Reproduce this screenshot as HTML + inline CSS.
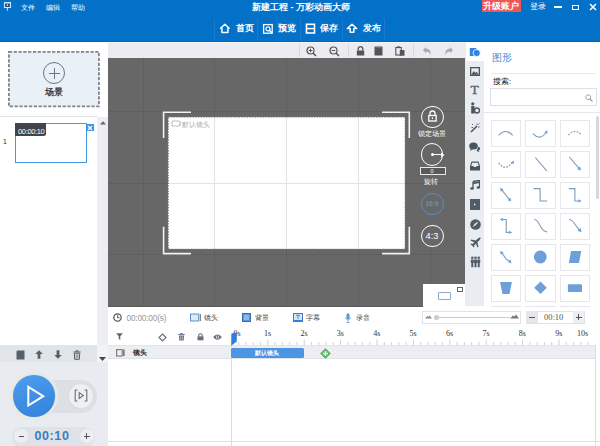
<!DOCTYPE html>
<html><head><meta charset="utf-8">
<style>
*{box-sizing:border-box;margin:0;padding:0}
html,body{width:600px;height:446px;overflow:hidden;background:#fff;font-family:"Liberation Sans",sans-serif;position:relative}
.a{position:absolute}
.t{position:absolute;white-space:nowrap;line-height:1}
</style></head><body>

<!-- TOP BAR -->
<div class="a" style="left:0;top:0;width:600px;height:42px;background:#0471c9"></div>
<div class="a" style="left:0;top:41px;width:600px;height:1px;background:#0963b6"></div>
<!-- logo -->
<svg class="a" style="left:0;top:0" width="14" height="12" viewBox="0 0 14 12"><rect x="4.5" y="2.8" width="6" height="4.7" fill="#1f4f80" stroke="#cfe6ff" stroke-width="1.1"/><path d="M4 2.6H11" stroke="#cfe6ff" stroke-width="1.2"/><circle cx="7.4" cy="5" r="0.8" fill="#fff"/><path d="M7.4 8V10.8" stroke="#bfe0ff" stroke-width="1"/></svg>
<div class="t" style="left:21px;top:3.8px;font-size:7px;color:#fff">文件</div>
<div class="t" style="left:46px;top:3.8px;font-size:7px;color:#fff">编辑</div>
<div class="t" style="left:71px;top:3.8px;font-size:7px;color:#fff">帮助</div>
<div class="t" style="left:252px;top:2.5px;font-size:9px;color:#fff;font-weight:bold">新建工程 - 万彩动画大师</div>
<!-- upgrade -->
<div class="a" style="left:482px;top:0;width:38.7px;height:12.3px;background:#ec575b"></div>
<div class="t" style="left:483px;top:2px;font-size:9px;color:#fff;font-weight:bold">升级账户</div>
<div class="t" style="left:530px;top:3px;font-size:7.5px;color:#fff">登录</div>
<div class="a" style="left:554px;top:6px;width:8px;height:1.5px;background:#fff"></div>
<div class="a" style="left:572px;top:4.5px;width:7px;height:5px;border:1.5px solid #fff"></div>
<svg class="a" style="left:589px;top:3px" width="8" height="8" viewBox="0 0 8 8"><path d="M1 1L7 7M7 1L1 7" stroke="#fff" stroke-width="1.5"/></svg>

<!-- toolbar buttons -->
<div class="a" style="left:214px;top:18px;width:1px;height:22px;background:#1b7acd"></div>
<div class="a" style="left:257px;top:18px;width:1px;height:22px;background:#1b7acd"></div>
<div class="a" style="left:300px;top:18px;width:1px;height:22px;background:#1b7acd"></div>
<div class="a" style="left:342px;top:18px;width:1px;height:22px;background:#1b7acd"></div>
<div class="a" style="left:384px;top:18px;width:1px;height:22px;background:#1b7acd"></div>
<!-- home icon -->
<svg class="a" style="left:218px;top:22px" width="14" height="13" viewBox="0 0 14 13"><path d="M6.9 2.2L2.6 6.3H3.9V10.4H9.9V6.3H11.2Z" stroke="#fff" stroke-width="1.5" fill="none" stroke-linejoin="round"/></svg>
<div class="t" style="left:236px;top:24px;font-size:9px;color:#fff;font-weight:bold">首页</div>
<!-- preview icon -->
<svg class="a" style="left:262px;top:23px" width="12" height="12" viewBox="0 0 12 12"><rect x="1.6" y="1.6" width="8.6" height="8.6" stroke="#fff" stroke-width="1.3" fill="none"/><circle cx="5.9" cy="5.9" r="2" stroke="#fff" stroke-width="1.2" fill="none"/><path d="M7.3 7.3L9.8 9.8" stroke="#fff" stroke-width="1.3"/></svg>
<div class="t" style="left:278px;top:24px;font-size:9px;color:#fff;font-weight:bold">预览</div>
<!-- save icon -->
<svg class="a" style="left:305px;top:23px" width="11" height="11" viewBox="0 0 11 11"><rect x="1.5" y="1.3" width="8" height="8.7" stroke="#fff" stroke-width="1.6" fill="none"/><path d="M1.5 5.6H9.5" stroke="#fff" stroke-width="1.5"/></svg>
<div class="t" style="left:320px;top:24px;font-size:9px;color:#fff;font-weight:bold">保存</div>
<!-- publish icon -->
<svg class="a" style="left:345px;top:22px" width="14" height="13" viewBox="0 0 14 13"><path d="M7 2.2L2.3 6.5H5.2V10.3H8.8V6.5H11.7Z" stroke="#fff" stroke-width="1.5" fill="none" stroke-linejoin="round"/></svg>
<div class="t" style="left:363px;top:24px;font-size:9px;color:#fff;font-weight:bold">发布</div>

<!-- LEFT PANEL -->
<div class="a" style="left:0;top:42px;width:108px;height:304px;background:#fff"></div>
<svg class="a" style="left:7px;top:50px" width="94" height="58" viewBox="0 0 94 58"><rect x="1.9" y="1.9" width="90" height="54.5" fill="#eaf0f8" stroke="#808387" stroke-width="1.8" stroke-dasharray="3.2 1.6"/></svg>
<div class="a" style="left:43px;top:62px;width:22px;height:22px;border:1.3px solid #6b7682;border-radius:50%"></div>
<div class="a" style="left:48.5px;top:72.5px;width:11px;height:1px;background:#6b7682"></div>
<div class="a" style="left:53.5px;top:67.5px;width:1px;height:11px;background:#6b7682"></div>
<div class="t" style="left:45px;top:88px;font-size:9px;color:#3a3a3a;font-weight:bold">场景</div>
<div class="a" style="left:0;top:116px;width:97px;height:1px;background:#dde1e6"></div>
<div class="a" style="left:97px;top:117px;width:11px;height:228px;background:#eceef2"></div>
<svg class="a" style="left:99.5px;top:120.5px" width="6" height="4" viewBox="0 0 6 4"><path d="M0 3.5L3 0.3L6 3.5Z" fill="#666"/></svg>
<div class="t" style="left:3px;top:138px;font-size:7px;color:#333">1</div>
<div class="a" style="left:15px;top:123px;width:71.5px;height:40px;border:1.5px solid #4797e0;background:#fff"></div>
<div class="a" style="left:15px;top:123px;width:30.5px;height:13.3px;background:#3f454b;border-radius:0 0 2.5px 0"></div>
<div class="t" style="left:18px;top:127.5px;font-size:7.5px;color:#fff;letter-spacing:-0.35px">00:00:10</div>
<div class="a" style="left:86px;top:124.3px;width:8px;height:6.7px;background:#3a93e8"></div>
<svg class="a" style="left:87px;top:124.6px" width="6" height="6" viewBox="0 0 6 6"><path d="M1 1L5 5M5 1L1 5" stroke="#fff" stroke-width="1.4"/></svg>
<!-- left bottom -->
<div class="a" style="left:0;top:345px;width:97px;height:17.5px;background:#e1e4e8"></div>
<div class="a" style="left:97px;top:345px;width:11px;height:17px;background:#f2f3f5"></div>
<div class="a" style="left:0;top:362px;width:108px;height:84px;background:#e8ebf0"></div>


<!-- left bottom icons -->
<svg class="a" style="left:16px;top:349.5px" width="9" height="10" viewBox="0 0 9 10"><path d="M1.5 0.5H8.5V9.5H0.5V1.5Z" fill="#56606b"/><path d="M1.5 0.5V1.5H0.5" fill="none" stroke="#8a939c" stroke-width="0.5"/></svg>
<svg class="a" style="left:35px;top:350px" width="8" height="9" viewBox="0 0 8 9"><path d="M4 0.3L7.8 4H5.4V8.7H2.6V4H0.2Z" fill="#56606b"/></svg>
<svg class="a" style="left:54px;top:350px" width="8" height="9" viewBox="0 0 8 9"><path d="M4 8.7L7.8 5H5.4V0.3H2.6V5H0.2Z" fill="#56606b"/></svg>
<svg class="a" style="left:73px;top:349.5px" width="8" height="10" viewBox="0 0 8 10"><path d="M0.3 2H7.7M2.8 2V0.8H5.2V2" fill="none" stroke="#56606b" stroke-width="0.9"/><path d="M1.3 3.2H6.7L6.3 9.3H1.7Z" fill="none" stroke="#56606b" stroke-width="1"/><path d="M3.2 4.3V8.3M4.8 4.3V8.3" stroke="#56606b" stroke-width="0.7"/></svg>
<svg class="a" style="left:99px;top:357px" width="7" height="4" viewBox="0 0 7 4"><path d="M0 0H7L3.5 4Z" fill="#444"/></svg>
<!-- play pill -->
<div class="a" style="left:12px;top:379.5px;width:85px;height:33.5px;border-radius:17px;background:#dcdfe4"></div>
<div class="a" style="left:10px;top:371.5px;width:48px;height:48px;border-radius:50%;background:#ece9e2"></div>
<div class="a" style="left:12.5px;top:374.3px;width:43px;height:43px;border-radius:50%;background:#cfe3f7"></div>
<div class="a" style="left:13.2px;top:375px;width:41.6px;height:41.6px;border-radius:50%;background:linear-gradient(160deg,#4d9df0,#3282db)"></div>
<svg class="a" style="left:20px;top:380px" width="30" height="32" viewBox="0 0 30 32"><path d="M8.3 6.8L23.3 16.2L8.3 25.5Z" fill="none" stroke="#fff" stroke-width="2" stroke-linejoin="miter"/></svg>
<div class="a" style="left:67.5px;top:382.5px;width:26.5px;height:26.5px;border-radius:50%;background:#eff0f2;border:1px solid #d8dbe0"></div>
<svg class="a" style="left:74px;top:389px" width="14" height="13" viewBox="0 0 14 13"><path d="M3.5 1H1.2V12H3.5M10.5 1H12.8V12H10.5" fill="none" stroke="#6a6e74" stroke-width="1.1"/><path d="M5.2 3.6L9.3 6.5L5.2 9.4Z" fill="none" stroke="#6a6e74" stroke-width="1.1"/></svg>
<!-- time pill -->
<div class="a" style="left:12.3px;top:426.7px;width:82.5px;height:21px;border-radius:10.5px;background:#dfe2e7"></div>
<div class="a" style="left:14.3px;top:429px;width:14px;height:14px;border-radius:50%;background:#eceef1"></div>
<div class="a" style="left:79.7px;top:429px;width:14px;height:14px;border-radius:50%;background:#eceef1"></div>
<div class="a" style="left:18.5px;top:435.5px;width:5.5px;height:1.1px;background:#555"></div>
<div class="a" style="left:84px;top:435.5px;width:5.5px;height:1.1px;background:#555"></div>
<div class="a" style="left:86.2px;top:433.2px;width:1.1px;height:5.5px;background:#555"></div>
<div class="t" style="left:34.5px;top:429.8px;font-size:12.5px;font-weight:bold;color:#3a7cc6;letter-spacing:0.6px">00:10</div>
<!-- CANVAS -->
<div class="a" style="left:108px;top:42px;width:357px;height:16px;background:#eaecf0"></div>
<div class="a" style="left:108px;top:42px;width:357px;height:1px;background:#f2f6fa"></div>
<div class="a" style="left:108px;top:58px;width:357px;height:249px;background:#676767"></div>
<div class="a" style="left:108px;top:306px;width:357px;height:1px;background:#5a5a5a"></div>


<!-- grid -->
<div class="a" style="left:143px;top:58px;width:1px;height:248px;background:#5f5f5f"></div>
<div class="a" style="left:214px;top:58px;width:1px;height:248px;background:#5f5f5f"></div>
<div class="a" style="left:286px;top:58px;width:1px;height:248px;background:#5f5f5f"></div>
<div class="a" style="left:358px;top:58px;width:1px;height:248px;background:#5f5f5f"></div>
<div class="a" style="left:430px;top:58px;width:1px;height:47px;background:#5f5f5f"></div>
<div class="a" style="left:430px;top:247px;width:1px;height:59px;background:#5f5f5f"></div>
<div class="a" style="left:108px;top:111px;width:357px;height:1px;background:#5f5f5f"></div>
<div class="a" style="left:108px;top:183px;width:357px;height:1px;background:#5f5f5f"></div>
<div class="a" style="left:108px;top:254px;width:357px;height:1px;background:#5f5f5f"></div>
<!-- stage -->
<div class="a" style="left:168px;top:117px;width:237px;height:132px;background:#fff"></div>
<div class="a" style="left:214px;top:117px;width:1px;height:132px;background:#e2e2e2"></div>
<div class="a" style="left:286px;top:117px;width:1px;height:132px;background:#e2e2e2"></div>
<div class="a" style="left:358px;top:117px;width:1px;height:132px;background:#e2e2e2"></div>
<div class="a" style="left:168px;top:183px;width:237px;height:1px;background:#e2e2e2"></div>
<svg class="a" style="left:150px;top:100px" width="280" height="170" viewBox="150 100 280 170">
 <rect x="168.1" y="116.8" width="237.2" height="132.6" fill="none" stroke="#747474" stroke-width="1.3" stroke-dasharray="1.6 1.1"/>
 <g fill="none" stroke="#f2f2f2" stroke-width="1.6">
  <path d="M163.6 138V112.2H191"/>
  <path d="M382 112.2H409.3V138"/>
  <path d="M163.6 226.7V253.6H191"/>
  <path d="M382 253.6H409.3V226.7"/>
 </g>
</svg>
<!-- default camera label -->
<svg class="a" style="left:171px;top:120px" width="10" height="7" viewBox="0 0 10 7"><path d="M1 1H8.3V2.3L9.3 1.8V5.2L8.3 4.7V6H1Z" fill="none" stroke="#b5b5b5" stroke-width="0.9"/></svg>
<div class="t" style="left:182px;top:121px;font-size:7px;color:#a8a8a8">默认镜头</div>
<!-- right controls -->
<div class="a" style="left:421px;top:105.5px;width:22.5px;height:22.5px;border:1.5px solid #fff;border-radius:50%"></div>
<svg class="a" style="left:427px;top:110px" width="11" height="12" viewBox="0 0 11 12"><path d="M3 5.5V3.5A2.5 2.5 0 0 1 8 3.5V5.5" fill="none" stroke="#fff" stroke-width="1.3"/><rect x="1.8" y="5.5" width="7.4" height="5.5" fill="none" stroke="#fff" stroke-width="1.3"/><path d="M5.5 7.3V9" stroke="#fff" stroke-width="1.2"/></svg>
<div class="t" style="left:418px;top:130px;font-size:7.3px;color:#fff">锁定场景</div>
<div class="a" style="left:420.8px;top:143px;width:22.5px;height:22.5px;border:1.5px solid #fff;border-radius:50%"></div>
<div class="a" style="left:430.5px;top:152.8px;width:3px;height:3px;background:#fff;border-radius:50%"></div>
<div class="a" style="left:432px;top:153.6px;width:11px;height:1.3px;background:#fff"></div>
<svg class="a" style="left:441px;top:151.5px" width="4" height="6" viewBox="0 0 4 6"><path d="M0 0.5L3.5 3L0 5.5Z" fill="#fff"/></svg>
<div class="a" style="left:420px;top:167px;width:25.5px;height:8px;border:1px solid #e8e8e8;background:#5a5a5a"></div>
<div class="t" style="left:430.5px;top:168.5px;font-size:5.5px;color:#fff">0</div>
<div class="t" style="left:424px;top:177.5px;font-size:7.3px;color:#fff">旋转</div>
<div class="a" style="left:421px;top:192.7px;width:22.8px;height:22.8px;border:1.8px solid #5a8bcb;border-radius:50%"></div>
<div class="t" style="left:425.5px;top:200.3px;font-size:7px;color:#5b90d8;letter-spacing:-0.3px;font-weight:bold">16:9</div>
<div class="a" style="left:421px;top:224.5px;width:22.5px;height:22.5px;border:1.5px solid #fff;border-radius:50%"></div>
<div class="t" style="left:425.5px;top:231.5px;font-size:9.3px;color:#fff">4:3</div>
<!-- mini preview -->
<div class="a" style="left:423px;top:284px;width:42px;height:23px;background:#fff"></div>
<div class="a" style="left:438px;top:292px;width:12.5px;height:7.5px;border:1px solid #8fabc9;border-radius:1px"></div>
<div class="a" style="left:457px;top:287px;width:6px;height:4.5px;border:0.8px solid #666;border-top-width:1.8px"></div>


<!-- canvas toolbar icons -->
<div class="a" style="left:299px;top:43px;width:1px;height:14px;background:#d6d9de"></div>
<div class="a" style="left:348px;top:43px;width:1px;height:14px;background:#d6d9de"></div>
<div class="a" style="left:413px;top:43px;width:1px;height:14px;background:#d6d9de"></div>
<svg class="a" style="left:306px;top:46px" width="11" height="11" viewBox="0 0 11 11"><circle cx="4.5" cy="4.5" r="3.5" fill="none" stroke="#555" stroke-width="1.2"/><path d="M2.7 4.5H6.3M4.5 2.7V6.3" stroke="#555" stroke-width="1"/><path d="M7 7L10 10" stroke="#555" stroke-width="1.5"/></svg>
<svg class="a" style="left:329px;top:46px" width="11" height="11" viewBox="0 0 11 11"><circle cx="4.5" cy="4.5" r="3.5" fill="none" stroke="#555" stroke-width="1.2"/><path d="M2.7 4.5H6.3" stroke="#555" stroke-width="1"/><path d="M7 7L10 10" stroke="#555" stroke-width="1.5"/></svg>
<svg class="a" style="left:356px;top:46px" width="9" height="10" viewBox="0 0 9 10"><path d="M2.2 4.5V3A2.3 2.3 0 0 1 6.8 3V4.5" fill="none" stroke="#555" stroke-width="1.3"/><rect x="0.8" y="4.5" width="7.4" height="5" fill="#555"/></svg>
<svg class="a" style="left:374px;top:46px" width="9" height="10" viewBox="0 0 9 10"><rect x="0.5" y="0.5" width="8" height="9" rx="0.5" fill="#555"/><path d="M1.5 1.5H7.5" stroke="#888" stroke-width="0.6"/></svg>
<svg class="a" style="left:395px;top:46px" width="10" height="10" viewBox="0 0 10 10"><rect x="0.8" y="1.5" width="5.5" height="7.5" fill="none" stroke="#555" stroke-width="1.1"/><rect x="2.3" y="0.3" width="2.5" height="1.8" fill="#555"/><rect x="4.8" y="4" width="4.7" height="5.7" fill="#555"/></svg>
<svg class="a" style="left:422px;top:46px" width="10" height="10" viewBox="0 0 10 10"><path d="M1 4L4 1V2.8C7.5 2.8 9 5 8.5 9C7.8 6.8 6.5 5.5 4 5.5V7.2Z" fill="#a5a8ad"/></svg>
<svg class="a" style="left:443.5px;top:46px" width="10" height="10" viewBox="0 0 10 10"><path d="M9 4L6 1V2.8C2.5 2.8 1 5 1.5 9C2.2 6.8 3.5 5.5 6 5.5V7.2Z" fill="#a5a8ad"/></svg>

<!-- RIGHT ICON STRIP -->
<div class="a" style="left:465px;top:42px;width:19px;height:264px;background:#e9ecf1"></div>
<div class="a" style="left:466px;top:42px;width:18px;height:19px;background:#fff"></div>


<!-- strip icons -->
<svg class="a" style="left:469px;top:47px" width="12" height="10" viewBox="0 0 12 10"><rect x="0.8" y="1" width="6.5" height="8" fill="#2f86dc"/><circle cx="7.7" cy="6" r="3.6" fill="#2f86dc" stroke="#fff" stroke-width="0.8"/></svg>
<svg class="a" style="left:470px;top:66.5px" width="10" height="9" viewBox="0 0 10 9"><rect x="0" y="0" width="10" height="9" fill="#4a5560"/><rect x="1.3" y="1.3" width="7.4" height="6.4" fill="#e9ecf1"/><path d="M1.3 7.7L3.8 4L5.5 6L6.8 4.8L8.7 7.7Z" fill="#4a5560"/></svg>
<div class="t" style="left:470.5px;top:82.5px;font-size:13.5px;color:#525c67;font-family:'Liberation Serif',serif;-webkit-text-stroke:0.3px #525c67">T</div>
<svg class="a" style="left:470px;top:102px" width="10" height="12" viewBox="0 0 10 12"><circle cx="2.8" cy="1.8" r="1.6" fill="#4a5560"/><path d="M1.2 4H4.5V11.5H1.2Z" fill="#4a5560"/><circle cx="7" cy="8.5" r="2.5" fill="none" stroke="#4a5560" stroke-width="1.4"/></svg>
<svg class="a" style="left:470px;top:123px" width="10" height="10" viewBox="0 0 10 10"><path d="M1 9L7 3" stroke="#4a5560" stroke-width="1.6"/><path d="M7 0.5V2M8.5 1.5L9.5 0.5M8 4H9.5M2 1L3 2M1.5 4.5H3" stroke="#4a5560" stroke-width="0.9"/></svg>
<svg class="a" style="left:469px;top:142px" width="12" height="10" viewBox="0 0 12 10"><ellipse cx="4.5" cy="4" rx="4.3" ry="3.5" fill="#4a5560"/><path d="M2 6.5L1 9L4 7Z" fill="#4a5560"/><path d="M9.5 4.5C11.5 5.5 11.5 8 9.5 8.5L10.5 10L7.5 9" fill="#4a5560"/></svg>
<svg class="a" style="left:470px;top:161px" width="10" height="10" viewBox="0 0 10 10"><path d="M1.5 0.5H8.5L10 5V9.5H0V5Z" fill="#4a5560"/><path d="M2.2 1.7H7.8L8.8 5H6.3V6H3.7V5H1.2Z" fill="#e9ecf1"/></svg>
<svg class="a" style="left:470px;top:180px" width="10" height="10" viewBox="0 0 10 10"><path d="M3 1.5L9.5 0.3V7.5" stroke="#4a5560" stroke-width="1.3" fill="none"/><path d="M3 1.5V8.5" stroke="#4a5560" stroke-width="1.3"/><ellipse cx="2" cy="8.5" rx="1.8" ry="1.3" fill="#4a5560"/><ellipse cx="8.3" cy="7.5" rx="1.8" ry="1.3" fill="#4a5560"/><path d="M3 2.5L9.5 1.3V3L3 4.2Z" fill="#4a5560"/></svg>
<svg class="a" style="left:470px;top:199px" width="10" height="11" viewBox="0 0 10 11"><rect x="0" y="0" width="10" height="11" fill="#525c67"/><path d="M4 4.3L6 5.5L4 6.7Z" fill="#dfe3e8"/></svg>
<svg class="a" style="left:469.5px;top:218.5px" width="11" height="11" viewBox="0 0 11 11"><circle cx="5.5" cy="5.5" r="5.3" fill="#525c67"/><path d="M2.8 8.3C4 5 5 4 8.3 2.7C7.2 4.6 6 6.2 2.8 8.3Z" fill="#e9ecf1"/></svg>
<svg class="a" style="left:469.5px;top:237px" width="11" height="11" viewBox="0 0 11 11"><path d="M10.6 0.4C9.6 0.3 8.6 0.8 7.6 1.8L5.8 3.6L1.3 2.5L0.4 3.4L4.2 5.2L2.6 6.9L1 6.6L0.4 7.2L2.3 8.7L3.8 10.6L4.4 10L4.1 8.4L5.8 6.8L7.6 10.6L8.5 9.7L7.4 5.2L9.2 3.4C10.2 2.4 10.7 1.4 10.6 0.4Z" fill="#525c67"/></svg>
<svg class="a" style="left:469.5px;top:256px" width="11" height="12" viewBox="0 0 11 12"><circle cx="2.3" cy="1.8" r="1.3" fill="#525c67"/><circle cx="5.5" cy="1.8" r="1.3" fill="#525c67"/><circle cx="8.7" cy="1.8" r="1.3" fill="#525c67"/><path d="M0.8 3.6H3.8V7H3.3V11.3H1.3V7H0.8ZM4 3.6H7V7H6.5V11.3H4.5V7H4ZM7.2 3.6H10.2V7H9.7V11.3H7.7V7H7.2Z" fill="#525c67"/></svg>
<!-- RIGHT PANEL -->
<div class="a" style="left:484px;top:42px;width:116px;height:264px;background:#fff"></div>
<div class="t" style="left:492.3px;top:53.3px;font-size:10px;color:#3a8ad6">图形</div>
<div class="a" style="left:491px;top:72.5px;width:105px;height:1px;background:#eaeaea"></div>
<div class="t" style="left:493px;top:77.5px;font-size:8px;color:#111">搜索:</div>
<div class="a" style="left:490px;top:88px;width:107px;height:18px;border:1px solid #dcdfe4;background:#fff"></div>
<div class="a" style="left:484px;top:112px;width:116px;height:1px;background:#e5e8ec"></div>

<div class="a" style="left:490.5px;top:119.5px;width:30.5px;height:27.3px;border:1px solid #e5e7ea"></div>
<div class="a" style="left:525px;top:119.5px;width:30.5px;height:27.3px;border:1px solid #e5e7ea"></div>
<div class="a" style="left:559.5px;top:119.5px;width:30.5px;height:27.3px;border:1px solid #e5e7ea"></div>
<div class="a" style="left:490.5px;top:150.5px;width:30.5px;height:27.3px;border:1px solid #e5e7ea"></div>
<div class="a" style="left:525px;top:150.5px;width:30.5px;height:27.3px;border:1px solid #e5e7ea"></div>
<div class="a" style="left:559.5px;top:150.5px;width:30.5px;height:27.3px;border:1px solid #e5e7ea"></div>
<div class="a" style="left:490.5px;top:181.5px;width:30.5px;height:27.3px;border:1px solid #e5e7ea"></div>
<div class="a" style="left:525px;top:181.5px;width:30.5px;height:27.3px;border:1px solid #e5e7ea"></div>
<div class="a" style="left:559.5px;top:181.5px;width:30.5px;height:27.3px;border:1px solid #e5e7ea"></div>
<div class="a" style="left:490.5px;top:212.5px;width:30.5px;height:27.3px;border:1px solid #e5e7ea"></div>
<div class="a" style="left:525px;top:212.5px;width:30.5px;height:27.3px;border:1px solid #e5e7ea"></div>
<div class="a" style="left:559.5px;top:212.5px;width:30.5px;height:27.3px;border:1px solid #e5e7ea"></div>
<div class="a" style="left:490.5px;top:243.5px;width:30.5px;height:27.3px;border:1px solid #e5e7ea"></div>
<div class="a" style="left:525px;top:243.5px;width:30.5px;height:27.3px;border:1px solid #e5e7ea"></div>
<div class="a" style="left:559.5px;top:243.5px;width:30.5px;height:27.3px;border:1px solid #e5e7ea"></div>
<div class="a" style="left:490.5px;top:274.5px;width:30.5px;height:27.3px;border:1px solid #e5e7ea"></div>
<div class="a" style="left:525px;top:274.5px;width:30.5px;height:27.3px;border:1px solid #e5e7ea"></div>
<div class="a" style="left:559.5px;top:274.5px;width:30.5px;height:27.3px;border:1px solid #e5e7ea"></div>
<div class="a" style="left:490.5px;top:305.5px;width:30.5px;height:27.3px;border:1px solid #e5e7ea"></div>
<div class="a" style="left:525px;top:305.5px;width:30.5px;height:27.3px;border:1px solid #e5e7ea"></div>
<div class="a" style="left:559.5px;top:305.5px;width:30.5px;height:27.3px;border:1px solid #e5e7ea"></div><svg class="a" style="left:490px;top:119px" width="106" height="187" viewBox="0 0 106 187">
 <g fill="none" stroke="#7f9bbb" stroke-width="1.1">
  <path d="M8.6 16.4Q15.7 8.6 22.7 16.4"/>
  <path d="M43 14.5Q50 22.5 56.5 13"/><path d="M57.30 11.20L57.48 14.87L54.26 13.26Z" fill="#6d9fd8" stroke="none"/>
  <path d="M78.4 16Q85 9 91.6 16" stroke-dasharray="1.8 1.3"/>
  <path d="M8.6 43.8Q15.5 53 22.5 43.2" stroke-dasharray="1.8 1.3"/><path d="M23.80 41.60L23.70 45.27L20.61 43.42Z" fill="#6d9fd8" stroke="none"/>
  <path d="M45.3 38.5L56.7 51.8"/>
  <path d="M79.3 38L89.3 49.6"/><path d="M91.00 51.60L87.13 50.20L90.15 47.57Z" fill="#6d9fd8" stroke="none"/>
  <path d="M11.5 70.7L19.8 80.8"/><path d="M10.00 69.00L13.66 70.32L10.80 72.81Z" fill="#6d9fd8" stroke="none"/><path d="M21.30 82.50L17.64 81.18L20.50 78.69Z" fill="#6d9fd8" stroke="none"/>
  <path d="M43.6 69.6H50.1V82H57.2"/>
  <path d="M78.9 69.6H84.9V82H89"/><path d="M91.50 82.00L88.50 83.70L88.50 80.30Z" fill="#6d9fd8" stroke="none"/>
  <path d="M12.3 100.5H16.2V113.4H19.6"/><path d="M9.80 100.50L12.80 98.80L12.80 102.20Z" fill="#6d9fd8" stroke="none"/><path d="M22.20 113.40L19.20 115.10L19.20 111.70Z" fill="#6d9fd8" stroke="none"/>
  <path d="M44.3 100.5C50 100.5 50 112.9 57.2 112.9"/>
  <path d="M78.9 100.5C84 100.5 85 107 89.3 110.8"/><path d="M91.60 113.20L87.49 111.80L90.60 108.98Z" fill="#6d9fd8" stroke="none"/>
  <path d="M11.5 134C15 136 13.5 140 19.5 142"/><path d="M10.00 132.00L13.69 133.26L10.86 135.80Z" fill="#6d9fd8" stroke="none"/><path d="M21.50 144.20L17.75 143.14L20.44 140.45Z" fill="#6d9fd8" stroke="none"/>
 </g>
 <g fill="#6d9fd8">
  <circle cx="50.3" cy="138" r="6.4"/>
  <path d="M78.9 144L81 132H91.3L89 144Z"/>
  <path d="M10 163H21.9L19.5 174.9H12.5Z"/>
  <path d="M50.5 162.4L56.8 168.7L50.5 175L44.2 168.7Z"/>
  <rect x="77.9" y="165.2" width="14.1" height="7.9" rx="1"/>
 </g>
</svg>
<div class="a" style="left:595.5px;top:116px;width:3px;height:83px;background:#d5d8dd;border-radius:1.5px"></div>
<svg class="a" style="left:585px;top:94px" width="8" height="8" viewBox="0 0 8 8"><circle cx="3.2" cy="3.2" r="2.4" fill="none" stroke="#999" stroke-width="0.9"/><path d="M5 5L7.5 7.5" stroke="#999" stroke-width="1.1"/></svg>

<!-- TIMELINE -->
<div class="a" style="left:108px;top:307px;width:492px;height:139px;background:#fff"></div>


<!-- row1 -->
<svg class="a" style="left:112.5px;top:313px" width="9" height="9" viewBox="0 0 9 9"><circle cx="4.5" cy="4.5" r="3.7" fill="none" stroke="#555" stroke-width="1.2"/><path d="M4.5 2.3V4.7H6.5" fill="none" stroke="#555" stroke-width="1"/></svg>
<div class="t" style="left:126.5px;top:313.5px;font-size:8.3px;color:#999;letter-spacing:-0.2px">00:00:00(s)</div>
<svg class="a" style="left:190px;top:313px" width="12" height="9" viewBox="0 0 12 9"><rect x="0.5" y="1" width="8.2" height="7" fill="#dbe9f8" stroke="#5b90cf" stroke-width="1"/><path d="M10.3 1V8" stroke="#5b6a7a" stroke-width="1"/></svg>
<div class="t" style="left:203.5px;top:314px;font-size:7.2px;color:#444">镜头</div>
<svg class="a" style="left:242px;top:313px" width="9" height="9" viewBox="0 0 9 9"><rect x="0.5" y="0.5" width="8" height="8" fill="#5b95d8" stroke="#2f6fbf" stroke-width="1"/><rect x="2" y="2" width="5" height="5" fill="#8db7e6"/></svg>
<div class="t" style="left:254.5px;top:314px;font-size:7.2px;color:#444">背景</div>
<svg class="a" style="left:293px;top:313px" width="10" height="9" viewBox="0 0 10 9"><rect x="0.5" y="0.5" width="9" height="7" fill="#d6e6f7" stroke="#3b7fcf" stroke-width="1"/><path d="M3 2.3H7M5 2.3V6" stroke="#3b7fcf" stroke-width="0.9"/><path d="M0 8.5H10" stroke="#3b7fcf" stroke-width="1"/></svg>
<div class="t" style="left:305.5px;top:314px;font-size:7.2px;color:#444">字幕</div>
<svg class="a" style="left:345px;top:312.5px" width="6" height="10" viewBox="0 0 6 10"><rect x="1.5" y="0.3" width="3" height="6" rx="1.5" fill="#5b95d8"/><path d="M0.6 4.5C0.6 7.5 5.4 7.5 5.4 4.5M3 7.3V9.5M1.5 9.5H4.5" fill="none" stroke="#5b95d8" stroke-width="0.8"/></svg>
<div class="t" style="left:355.5px;top:314px;font-size:7.2px;color:#444">录音</div>
<!-- slider -->
<div class="a" style="left:421.5px;top:311px;width:99px;height:12.5px;border:1px solid #dfe2e6;background:#fff"></div>
<svg class="a" style="left:424.5px;top:314.5px" width="7" height="4" viewBox="0 0 7 4"><path d="M0 3.5L2.5 1L3.5 2L4.5 0.5L7 3.5Z" fill="#888"/></svg>
<div class="a" style="left:436px;top:317px;width:74px;height:1px;background:#c8cbd0"></div>
<div class="a" style="left:433.5px;top:314.5px;width:5px;height:5px;border-radius:50%;background:#c9ccd1"></div>
<svg class="a" style="left:510px;top:313.5px" width="9" height="5" viewBox="0 0 9 5"><path d="M0 4.5L3 1.5L4.5 2.5L6 0.5L9 4.5Z" fill="#777"/></svg>
<!-- time box -->
<div class="a" style="left:525.7px;top:310.5px;width:59px;height:13px;border:1px solid #dfe2e6;background:#fff"></div>
<div class="a" style="left:526.2px;top:311px;width:11.5px;height:12px;background:#e4e6ea"></div>
<div class="a" style="left:573px;top:311px;width:11px;height:12px;background:#eceef1"></div>
<div class="a" style="left:529px;top:316.5px;width:6px;height:1.1px;background:#555"></div>
<div class="a" style="left:575.5px;top:316.5px;width:6px;height:1.1px;background:#555"></div>
<div class="a" style="left:578px;top:314px;width:1.1px;height:6px;background:#555"></div>
<div class="t" style="left:544px;top:313px;font-size:8.5px;color:#555;font-family:'Liberation Serif',serif">00:10</div>
<!-- row2 icons -->
<svg class="a" style="left:115.5px;top:333px" width="7" height="7" viewBox="0 0 7 7"><path d="M0.2 0.3H6.8L4.3 3.3V6.8L2.7 6V3.3Z" fill="#5f646b"/></svg>
<svg class="a" style="left:157.5px;top:332.5px" width="9" height="9" viewBox="0 0 9 9"><path d="M4.5 1L8 4.5L4.5 8L1 4.5Z" fill="none" stroke="#6f747b" stroke-width="1.2"/></svg>
<svg class="a" style="left:178px;top:333px" width="7" height="8" viewBox="0 0 7 8"><path d="M0.2 1.5H6.8M2.4 1.5V0.5H4.6V1.5" fill="none" stroke="#6f747b" stroke-width="0.9"/><path d="M0.9 2.4H6.1L5.7 7.6H1.3Z" fill="#6f747b"/><path d="M2.7 3.4V6.6M4.3 3.4V6.6" stroke="#fff" stroke-width="0.5"/></svg>
<svg class="a" style="left:196.5px;top:333px" width="7" height="8" viewBox="0 0 7 8"><path d="M1.7 3.5V2.5A1.8 1.8 0 0 1 5.3 2.5V3.5" fill="none" stroke="#6a6f78" stroke-width="1.1"/><rect x="0.5" y="3.3" width="6" height="4" fill="#6a6f78"/></svg>
<svg class="a" style="left:212.5px;top:334px" width="9" height="6" viewBox="0 0 9 6"><path d="M0.3 3C2.5 -0.5 6.5 -0.5 8.7 3C6.5 6.5 2.5 6.5 0.3 3Z" fill="#6a6f78"/><circle cx="4.5" cy="3" r="1.6" fill="#fff"/><circle cx="4.5" cy="3" r="0.9" fill="#6a6f78"/></svg>
<!-- ruler -->
<svg class="a" style="left:231px;top:327px" width="370" height="19" viewBox="0 0 370 19">
 <g stroke="#c3c6cb" stroke-width="0.8">
<path d="M0.40 12.5V18"/>
<path d="M7.68 15V18"/>
<path d="M14.96 15V18"/>
<path d="M22.24 15V18"/>
<path d="M29.52 15V18"/>
<path d="M36.80 12.5V18"/>
<path d="M44.08 15V18"/>
<path d="M51.36 15V18"/>
<path d="M58.64 15V18"/>
<path d="M65.92 15V18"/>
<path d="M73.20 12.5V18"/>
<path d="M80.48 15V18"/>
<path d="M87.76 15V18"/>
<path d="M95.04 15V18"/>
<path d="M102.32 15V18"/>
<path d="M109.60 12.5V18"/>
<path d="M116.88 15V18"/>
<path d="M124.16 15V18"/>
<path d="M131.44 15V18"/>
<path d="M138.72 15V18"/>
<path d="M146.00 12.5V18"/>
<path d="M153.28 15V18"/>
<path d="M160.56 15V18"/>
<path d="M167.84 15V18"/>
<path d="M175.12 15V18"/>
<path d="M182.40 12.5V18"/>
<path d="M189.68 15V18"/>
<path d="M196.96 15V18"/>
<path d="M204.24 15V18"/>
<path d="M211.52 15V18"/>
<path d="M218.80 12.5V18"/>
<path d="M226.08 15V18"/>
<path d="M233.36 15V18"/>
<path d="M240.64 15V18"/>
<path d="M247.92 15V18"/>
<path d="M255.20 12.5V18"/>
<path d="M262.48 15V18"/>
<path d="M269.76 15V18"/>
<path d="M277.04 15V18"/>
<path d="M284.32 15V18"/>
<path d="M291.60 12.5V18"/>
<path d="M298.88 15V18"/>
<path d="M306.16 15V18"/>
<path d="M313.44 15V18"/>
<path d="M320.72 15V18"/>
<path d="M328.00 12.5V18"/>
<path d="M335.28 15V18"/>
<path d="M342.56 15V18"/>
<path d="M349.84 15V18"/>
<path d="M357.12 15V18"/>

 </g>
</svg>
<div class="t" style="left:264.0px;top:329.5px;font-size:8px;color:#333;font-family:'Liberation Serif',serif">1s</div>
<div class="t" style="left:300.4px;top:329.5px;font-size:8px;color:#333;font-family:'Liberation Serif',serif">2s</div>
<div class="t" style="left:336.8px;top:329.5px;font-size:8px;color:#333;font-family:'Liberation Serif',serif">3s</div>
<div class="t" style="left:373.2px;top:329.5px;font-size:8px;color:#333;font-family:'Liberation Serif',serif">4s</div>
<div class="t" style="left:409.6px;top:329.5px;font-size:8px;color:#333;font-family:'Liberation Serif',serif">5s</div>
<div class="t" style="left:446.0px;top:329.5px;font-size:8px;color:#333;font-family:'Liberation Serif',serif">6s</div>
<div class="t" style="left:482.4px;top:329.5px;font-size:8px;color:#333;font-family:'Liberation Serif',serif">7s</div>
<div class="t" style="left:518.8px;top:329.5px;font-size:8px;color:#333;font-family:'Liberation Serif',serif">8s</div>
<div class="t" style="left:555.2px;top:329.5px;font-size:8px;color:#333;font-family:'Liberation Serif',serif">9s</div>
<div class="t" style="left:577px;top:329.5px;font-size:8px;color:#333;font-family:'Liberation Serif',serif">10s</div>
<div class="t" style="left:233.5px;top:329.5px;font-size:8px;color:#333;font-family:'Liberation Serif',serif">0s</div>
<!-- track row -->
<div class="a" style="left:108px;top:345px;width:487px;height:14px;background:#eceef2;border-top:1px solid #e2e5ea;border-bottom:1px solid #dfe2e6"></div>
<div class="a" style="left:231px;top:345px;width:1px;height:101px;background:#d9dce0"></div>
<div class="a" style="left:595px;top:345px;width:1px;height:101px;background:#d9dce0"></div>
<div class="a" style="left:108px;top:440.5px;width:492px;height:1px;background:#dcdfe3"></div>
<svg class="a" style="left:116px;top:348.5px" width="10" height="8" viewBox="0 0 10 8"><rect x="0.6" y="0.6" width="5.6" height="6.4" fill="none" stroke="#777" stroke-width="1.1"/><path d="M7.9 0.6V7" stroke="#666" stroke-width="1.4"/></svg>
<div class="t" style="left:133px;top:348.5px;font-size:7.3px;color:#333;font-weight:bold">镜头</div>
<div class="a" style="left:231px;top:348px;width:73px;height:9.8px;background:#4d94e3;border-radius:1.5px"></div>
<div class="t" style="left:255px;top:349.8px;font-size:6px;color:#fff;font-weight:bold">默认镜头</div>
<svg class="a" style="left:319.5px;top:347.5px" width="11" height="11" viewBox="0 0 11 11"><path d="M5.5 0.5L10.5 5.5L5.5 10.5L0.5 5.5Z" fill="#5cb85c" stroke="#4ea64e" stroke-width="0.6"/><path d="M5.5 3V8M3 5.5H8" stroke="#e8f5e8" stroke-width="1.5"/></svg>
<svg class="a" style="left:230.5px;top:331.5px" width="6" height="14" viewBox="0 0 6 14"><path d="M0.3 13.5V1.8Q3 0.5 5.8 0.5V9.5L0.5 13.5Z" fill="#2f7fd8"/></svg>

</body></html>
